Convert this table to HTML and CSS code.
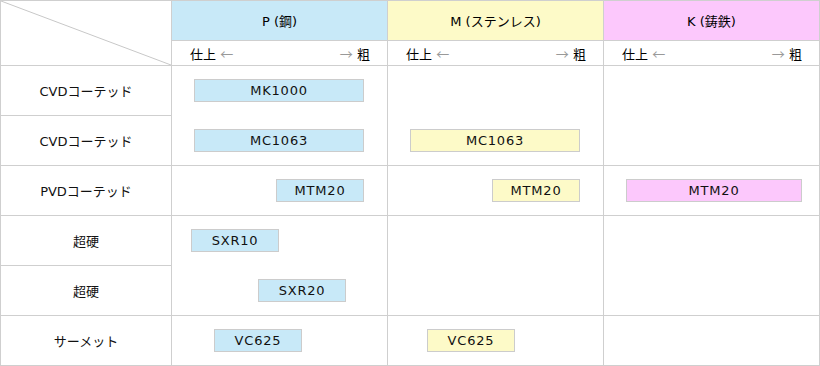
FILE: index.html
```html
<!DOCTYPE html>
<html lang="ja">
<head>
<meta charset="utf-8">
<link rel="stylesheet" href="styles.css">
</head>
<body>
<div class="chart">
  <div class="corner">
    <svg class="diag" viewBox="0 0 170 64" preserveAspectRatio="none"><line x1="0" y1="0" x2="170" y2="64" /></svg>
  </div>
  <div class="head p">P (鋼)</div>
  <div class="head m">M (ステンレス)</div>
  <div class="head k">K (鋳鉄)</div>

  <div class="sub"><span>仕上 <i>←</i></span><span><i>→</i> 粗</span></div>
  <div class="sub"><span>仕上 <i>←</i></span><span><i>→</i> 粗</span></div>
  <div class="sub"><span>仕上 <i>←</i></span><span><i>→</i> 粗</span></div>

  <div class="label r3">CVDコーテッド</div>
  <div class="label r4">CVDコーテッド</div>
  <div class="label r5">PVDコーテッド</div>
  <div class="label r6">超硬</div>
  <div class="label r7">超硬</div>
  <div class="label r8">サーメット</div>

  <!-- CVD -->
  <div class="cell span2 c2 r3">
    <div class="lane"><div class="bar bp" style="margin-left:22px;width:170px">MK1000</div></div>
    <div class="lane"><div class="bar bp" style="margin-left:22px;width:170px">MC1063</div></div>
  </div>
  <div class="cell span2 c3 r3">
    <div class="lane"></div>
    <div class="lane"><div class="bar bm" style="margin-left:22px;width:170px">MC1063</div></div>
  </div>
  <div class="cell span2 c4 r3"></div>

  <!-- PVD -->
  <div class="cell c2 r5"><div class="lane"><div class="bar bp" style="margin-left:104px;width:88px">MTM20</div></div></div>
  <div class="cell c3 r5"><div class="lane"><div class="bar bm" style="margin-left:104px;width:88px">MTM20</div></div></div>
  <div class="cell c4 r5"><div class="lane"><div class="bar bk" style="margin-left:22px;width:176px">MTM20</div></div></div>

  <!-- 超硬 -->
  <div class="cell span2 c2 r6">
    <div class="lane"><div class="bar bp" style="margin-left:19px;width:88px">SXR10</div></div>
    <div class="lane"><div class="bar bp" style="margin-left:86px;width:88px">SXR20</div></div>
  </div>
  <div class="cell span2 c3 r6"></div>
  <div class="cell span2 c4 r6"></div>

  <!-- サーメット -->
  <div class="cell c2 r8"><div class="lane"><div class="bar bp" style="margin-left:42px;width:88px">VC625</div></div></div>
  <div class="cell c3 r8"><div class="lane"><div class="bar bm" style="margin-left:39px;width:88px">VC625</div></div></div>
  <div class="cell c4 r8"></div>
</div>
</body>
</html>
```
FILE: styles.css
```css
html, body {
  margin: 0;
  padding: 0;
  background: #fff;
}

body {
  font-family: "DejaVu Sans", "Noto Sans CJK JP", sans-serif;
  font-size: 13px;
  color: #111;
}

.chart {
  width: 818px;
  height: 364px;
  padding: 1px;
  display: grid;
  grid-template-columns: 170px 215px 215px 215px;
  grid-template-rows: 39px 24px 49px 49px 49px 49px 49px 49px;
  gap: 1px;
  background: #cfcfcf;
}

.chart > div {
  background: #fff;
}

.corner {
  grid-column: 1;
  grid-row: 1 / span 2;
  position: relative;
}

.diag {
  position: absolute;
  left: 0;
  top: 0;
  width: 100%;
  height: 100%;
}

.diag line {
  stroke: #c8c8c8;
  stroke-width: 1;
  vector-effect: non-scaling-stroke;
}

.head {
  grid-row: 1;
  display: flex;
  align-items: center;
  justify-content: center;
  color: #000;
  font-size: 13px;
}

.chart > .head.p { background: #c8e9f8; }
.chart > .head.m { background: #fdfac8; }
.chart > .head.k { background: #fcc8fc; }

.sub {
  grid-row: 2;
  display: flex;
  align-items: center;
  justify-content: space-between;
  padding: 0 17px 0 18px;
  font-size: 13px;
  color: #000;
}

.sub i {
  font-style: normal;
  color: #999;
  font-family: "Noto Sans CJK JP", sans-serif;
  font-size: 13px;
}

.label {
  grid-column: 1;
  display: flex;
  align-items: center;
  justify-content: center;
  color: #111;
}

.r3 { grid-row: 3; }
.r4 { grid-row: 4; }
.r5 { grid-row: 5; }
.r6 { grid-row: 6; }
.r7 { grid-row: 7; }
.r8 { grid-row: 8; }

.c2 { grid-column: 2; }
.c3 { grid-column: 3; }
.c4 { grid-column: 4; }

.cell {
  display: flex;
  flex-direction: column;
}

.cell.span2.r3 { grid-row: 3 / span 2; }
.cell.span2.r6 { grid-row: 6 / span 2; }

.lane {
  flex: 1;
  display: flex;
  align-items: center;
}

.bar {
  box-sizing: border-box;
  height: 23px;
  border: 1px solid #cccccc;
  display: flex;
  align-items: center;
  justify-content: center;
  letter-spacing: 0.8px;
  color: #111;
  font-size: 13px;
}

.bp { background: #c8e9f8; }
.bm { background: #fdfac8; }
.bk { background: #fcc8fc; }
```
